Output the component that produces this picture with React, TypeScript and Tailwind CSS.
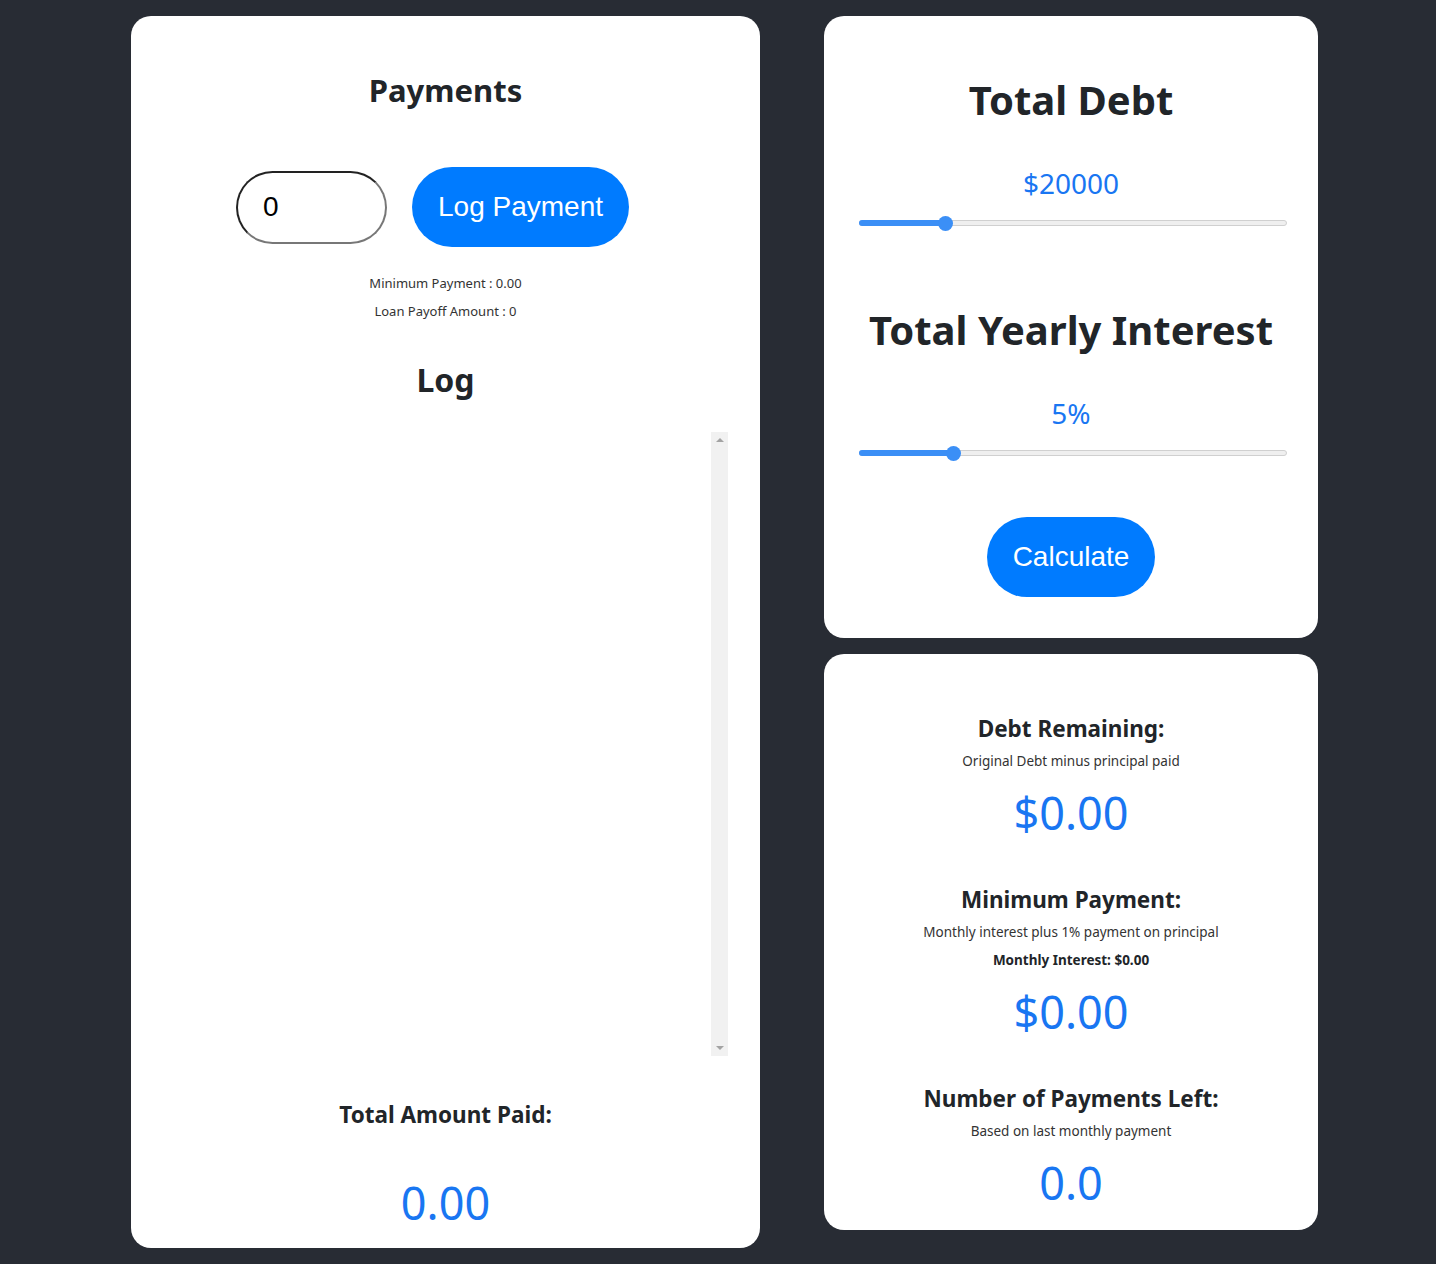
import React from "react";

const font = { fontFamily: '"Noto Sans", "Open Sans", sans-serif' };
const arial = { fontFamily: '"Liberation Sans", Arial, sans-serif' };

function Slider({ pct }: { pct: number }) {
  return (
    <div className="relative h-4 w-[428px] ml-[35px]">
      <div className="absolute left-0 right-0 top-[5px] h-[6px] rounded-full bg-[#efefef] border border-[#d0d0d0]" />
      <div
        className="absolute left-0 top-[5px] h-[6px] rounded-full bg-[#3b8ff6]"
        style={{ width: `${pct}px` }}
      />
      <div
        className="absolute top-[0.5px] h-[15px] w-[15px] rounded-full bg-[#3b8ff6]"
        style={{ left: `${pct - 7.5}px` }}
      />
    </div>
  );
}

export default function App() {
  return (
    <div
      className="min-h-[1264px] bg-[#282c34] flex justify-center gap-16 pt-4 pl-[13px] text-[#212529]"
      style={font}
    >
      {/* Left card */}
      <div className="w-[629px] h-[1232px] bg-white rounded-[20px] flex flex-col items-center px-8 text-center">
        <h2 className="mt-[55px] text-[31px] leading-[38px] font-bold">Payments</h2>
        <div className="mt-[58px] flex items-center gap-[25px] mr-[26px]">
          <div
            className="w-[151px] h-[73px] rounded-full border-2 border-t-[#222] border-l-[#222] border-b-[#777] border-r-[#777] flex items-center pl-[25px] text-[28px] text-black"
            style={arial}
          >
            0
          </div>
          <button
            className="w-[217px] h-[80px] rounded-full bg-[#007bff] text-white text-[28px]"
            style={arial}
          >
            Log Payment
          </button>
        </div>
        <p className="mt-[26px] text-[13px] leading-[20px] text-[#333]">Minimum Payment : 0.00</p>
        <p className="mt-[8px] text-[13px] leading-[20px] text-[#333]">Loan Payoff Amount : 0</p>
        <h2 className="mt-[40px] text-[32px] leading-[38px] font-bold">Log</h2>
        <div className="mt-[33px] w-full h-[624px] flex">
          <div className="flex-1" />
          <div className="w-[17px] h-full bg-[#f1f1f1] flex flex-col items-center justify-between py-[6px]">
            <div className="w-0 h-0 border-l-[4px] border-r-[4px] border-b-[4px] border-l-transparent border-r-transparent border-b-[#a3a3a3]" />
            <div className="w-0 h-0 border-l-[4px] border-r-[4px] border-t-[4px] border-l-transparent border-r-transparent border-t-[#a3a3a3]" />
          </div>
        </div>
        <h3 className="mt-[44px] text-[22.5px] leading-[29px] font-bold">Total Amount Paid:</h3>
        <p className="mt-[45px] text-[45px] leading-[58px] text-[#1976f2]">0.00</p>
      </div>

      {/* Right column */}
      <div className="w-[494px] flex flex-col gap-4">
        <div className="h-[622px] bg-white rounded-[20px] flex flex-col items-center text-center">
          <h1 className="mt-[60px] text-[40px] leading-[48px] font-bold">Total Debt</h1>
          <p className="mt-[42px] text-[28px] leading-[34px] text-[#1976f2]">$20000</p>
          <div className="mt-[15px] w-full">
            <Slider pct={86} />
          </div>
          <h1 className="mt-[75px] text-[40px] leading-[48px] font-bold">Total Yearly Interest</h1>
          <p className="mt-[42px] text-[28px] leading-[34px] text-[#1976f2]">5%</p>
          <div className="mt-[15px] w-full">
            <Slider pct={94} />
          </div>
          <button
            className="mt-[56px] w-[168px] h-[80px] rounded-full bg-[#007bff] text-white text-[28px]"
            style={arial}
          >
            Calculate
          </button>
        </div>

        <div className="h-[576px] bg-white rounded-[20px] flex flex-col items-center text-center">
          <h3 className="mt-[60px] text-[22.5px] leading-[29px] font-bold">Debt Remaining:</h3>
          <p className="mt-[8px] text-[13.5px] leading-[20px] text-[#333]">Original Debt minus principal paid</p>
          <p className="mt-[13px] text-[45px] leading-[58px] text-[#1976f2]">$0.00</p>
          <h3 className="mt-[43px] text-[22.5px] leading-[29px] font-bold">Minimum Payment:</h3>
          <p className="mt-[8px] text-[13.5px] leading-[20px] text-[#333]">Monthly interest plus 1% payment on principal</p>
          <p className="mt-[8px] text-[13.5px] leading-[20px] font-bold">Monthly Interest: $0.00</p>
          <p className="mt-[13px] text-[45px] leading-[58px] text-[#1976f2]">$0.00</p>
          <h3 className="mt-[43px] text-[22.5px] leading-[29px] font-bold">Number of Payments Left:</h3>
          <p className="mt-[8px] text-[13.5px] leading-[20px] text-[#333]">Based on last monthly payment</p>
          <p className="mt-[13px] text-[45px] leading-[58px] text-[#1976f2]">0.0</p>
        </div>
      </div>
    </div>
  );
}
